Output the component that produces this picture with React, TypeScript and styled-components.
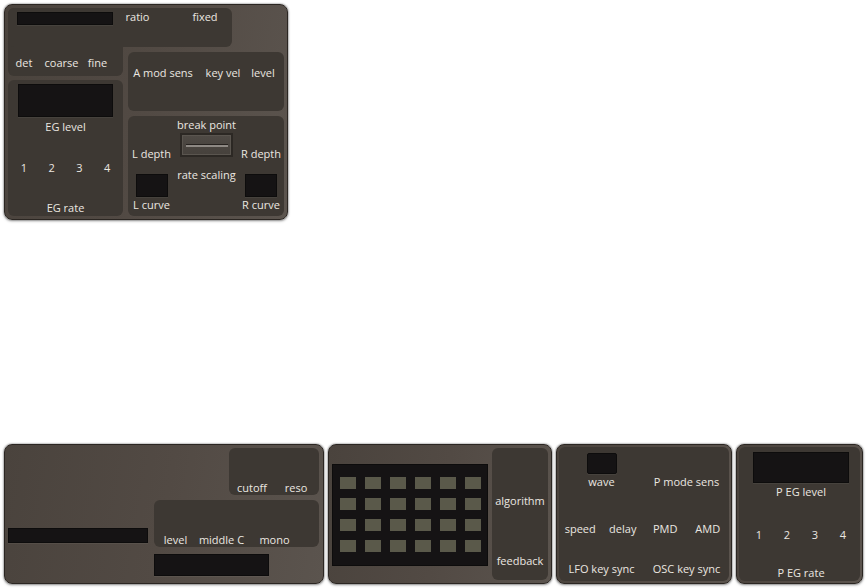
import React from "react";
import styled, { createGlobalStyle, css } from "styled-components";

const Global = createGlobalStyle`
  html, body { margin: 0; padding: 0; background: #ffffff; }
  body { font-family: "Open Sans", "Noto Sans", sans-serif; }
`;

type Place = { $c?: string; $r?: string };

const place = css<Place>`
  ${(p) => (p.$c ? `grid-column: ${p.$c};` : "")}
  ${(p) => (p.$r ? `grid-row: ${p.$r};` : "")}
`;

const Page = styled.div`
  width: 868px;
  height: 588px;
  box-sizing: border-box;
  padding: 4px 0 4px 4px;
  display: flex;
  flex-direction: column;
  justify-content: space-between;
`;

const Panel = styled.div<{ $w: number; $h: number; $pad?: number }>`
  box-sizing: border-box;
  width: ${(p) => p.$w}px;
  height: ${(p) => p.$h}px;
  border-radius: 8px;
  border: 1px solid #2b2622;
  background: linear-gradient(100deg, #4a433d 0%, #524a44 50%, #5b544e 100%);
  box-shadow: 0 0 2px rgba(0, 0, 0, 0.55), 0 1px 3px rgba(0, 0, 0, 0.35);
  padding: ${(p) => (p.$pad ?? 4) - 1}px;
`;

const Section = styled.div<Place>`
  ${place}
  background: #3d3833;
  border-radius: 6px;
`;

const Label = styled.span<Place>`
  ${place}
  justify-self: center;
  align-self: center;
  font-size: 11px;
  line-height: 14px;
  color: #ebe7e1;
  white-space: nowrap;
`;

const Screen = styled.div<Place & { $w: number; $h: number }>`
  ${place}
  box-sizing: border-box;
  width: ${(p) => p.$w}px;
  height: ${(p) => p.$h}px;
  background: #151314;
  border: 1px solid #0d0c0c;
  box-shadow: 0 1px 0 rgba(255, 255, 255, 0.05);
`;

/* ---------- operator panel (top) ---------- */

const OperatorPanel = styled(Panel)`
  display: grid;
  grid-template-columns: 115px 156px;
  column-gap: 5px;
  grid-template-rows: 39px 5px 24px 4px 31px 5px 100px;
`;

const FreqLeft = styled(Section)`
  grid-column: 1;
  grid-row: 1 / 4;
  display: grid;
  grid-template-columns: 32px 43px 29px 1fr;
  grid-template-rows: 48px 14px 1fr;
`;

const FreqWide = styled(Section)`
  grid-column: 1 / 3;
  grid-row: 1;
  width: 224px;
  display: grid;
  grid-template-columns: 9px 96px 49px 18px 50px;
  grid-template-rows: 4px 13px 1fr;
`;

const ModSens = styled(Section)`
  grid-column: 2;
  grid-row: 3 / 6;
  display: grid;
  grid-template-columns: 70px 50px 30px 1fr;
  grid-template-rows: 14px 13px 1fr;
`;

const EnvBox = styled(Section)`
  grid-column: 1;
  grid-row: 5 / 8;
  display: grid;
  padding: 0 2px;
  grid-template-columns: repeat(4, 1fr);
  grid-template-rows: 4px 33px 3px 13px 28px 14px 26px 14px 1fr;
`;

const KeyScale = styled(Section)`
  grid-column: 2;
  grid-row: 7;
  display: grid;
  grid-template-columns: 47px 63px 1fr;
  grid-template-rows: 2px 14px 1px 14px 10px 4px 7px 6px 8px 15px 1px 14px 1fr;
`;

const Slider = styled.div<Place>`
  ${place}
  justify-self: center;
  box-sizing: border-box;
  width: 53px;
  height: 24px;
  border: 2px solid #2c2824;
  background: linear-gradient(180deg, #4f4a45, #46413c);
  box-shadow: inset 0 0 0 1px #5a554f;
  display: flex;
  align-items: center;
  justify-content: center;
`;

const SliderSlot = styled.div`
  width: 42px;
  height: 2px;
  border-top: 1px solid #26221f;
  background: #8e8984;
  margin-top: 1px;
`;

/* ---------- bottom row ---------- */

const BottomRow = styled.div`
  display: flex;
  gap: 4px;
`;

const VoicePanel = styled(Panel)`
  display: grid;
  grid-template-columns: 140px 165px;
  column-gap: 6px;
  grid-template-rows: 47px 5px 47px 7px 22px;
`;

const FilterBox = styled(Section)`
  grid-column: 2;
  grid-row: 1;
  justify-self: end;
  width: 90px;
  display: grid;
  grid-template-columns: 46px 42px;
  grid-template-rows: 33px 14px;
`;

const LevelBox = styled(Section)`
  grid-column: 2;
  grid-row: 3;
  display: grid;
  grid-template-columns: 43px 49px 57px;
  grid-template-rows: 32px 15px;
`;

const WideBar = styled(Screen)`
  align-self: end;
  margin-bottom: 4px;
`;

const AlgoPanel = styled(Panel)`
  display: grid;
  grid-template-columns: 156px 56px;
  column-gap: 4px;
  grid-template-rows: 132px;
`;

const AlgoScreen = styled.div`
  align-self: start;
  margin-top: 16px;
  box-sizing: border-box;
  width: 156px;
  height: 102px;
  background: #151314;
  border: 1px solid #0d0c0c;
  padding: 12px 6px 13px 7px;
  display: grid;
  grid-template-columns: repeat(6, 16px);
  grid-auto-rows: 12px;
  gap: 9px;
`;

const AlgoCell = styled.div`
  background: #5a594a;
`;

const AlgoSide = styled(Section)`
  display: grid;
  grid-template-rows: 46px 14px 46px 14px 1fr;
  justify-items: center;
`;

const LfoBox = styled(Section)`
  display: grid;
  height: 100%;
  grid-template-columns: repeat(4, 1fr);
  grid-template-rows: 6px 21px 1px 14px 33px 14px 26px 14px 1fr;
`;

const WaveScreen = styled(Screen)`
  justify-self: center;
  border-radius: 2px;
`;

const PitchBox = styled(Section)`
  display: grid;
  height: 100%;
  box-sizing: border-box;
  padding: 0 3px 0 6px;
  grid-template-columns: repeat(4, 1fr);
  grid-template-rows: 5px 31px 2px 14px 29px 14px 24px 14px 1fr;
`;

const CenterScreen = styled(Screen)`
  justify-self: center;
`;

const algoCells = Array.from({ length: 24 }, (_, i) => i);

export default function App() {
  return (
    <>
      <Global />
      <Page>
        <OperatorPanel $w={284} $h={216}>
          <FreqLeft>
            <Label $c="1" $r="2">det</Label>
            <Label $c="2" $r="2">coarse</Label>
            <Label $c="3" $r="2">fine</Label>
          </FreqLeft>
          <FreqWide>
            <Screen $c="2" $r="2" $w={96} $h={13} />
            <Label $c="3" $r="1 / 3">ratio</Label>
            <Label $c="5" $r="1 / 3">fixed</Label>
          </FreqWide>
          <ModSens>
            <Label $c="1" $r="2">A mod sens</Label>
            <Label $c="2" $r="2">key vel</Label>
            <Label $c="3" $r="2">level</Label>
          </ModSens>
          <EnvBox>
            <CenterScreen $c="1 / -1" $r="2" $w={95} $h={33} />
            <Label $c="1 / -1" $r="4">EG level</Label>
            <Label $c="1" $r="6">1</Label>
            <Label $c="2" $r="6">2</Label>
            <Label $c="3" $r="6">3</Label>
            <Label $c="4" $r="6">4</Label>
            <Label $c="1 / -1" $r="8">EG rate</Label>
          </EnvBox>
          <KeyScale>
            <Label $c="2" $r="2">break point</Label>
            <Slider $c="2" $r="4 / 6">
              <SliderSlot />
            </Slider>
            <Label $c="1" $r="5 / 7">L depth</Label>
            <Label $c="3" $r="5 / 7">R depth</Label>
            <Label $c="2" $r="8 / 10">rate scaling</Label>
            <CenterScreen $c="1" $r="9 / 11" $w={32} $h={23} />
            <CenterScreen $c="3" $r="9 / 11" $w={32} $h={23} />
            <Label $c="1" $r="12">L curve</Label>
            <Label $c="3" $r="12">R curve</Label>
          </KeyScale>
        </OperatorPanel>

        <BottomRow>
          <VoicePanel $w={320} $h={140}>
            <FilterBox>
              <Label $c="1" $r="2">cutoff</Label>
              <Label $c="2" $r="2">reso</Label>
            </FilterBox>
            <WideBar $c="1" $r="3" $w={140} $h={15} />
            <LevelBox>
              <Label $c="1" $r="2">level</Label>
              <Label $c="2" $r="2">middle C</Label>
              <Label $c="3" $r="2">mono</Label>
            </LevelBox>
            <Screen $c="2" $r="5" $w={115} $h={22} />
          </VoicePanel>

          <AlgoPanel $w={224} $h={140}>
            <AlgoScreen>
              {algoCells.map((i) => (
                <AlgoCell key={i} />
              ))}
            </AlgoScreen>
            <AlgoSide>
              <Label $r="2">algorithm</Label>
              <Label $r="4">feedback</Label>
            </AlgoSide>
          </AlgoPanel>

          <Panel $w={176} $h={140} $pad={3}>
            <LfoBox>
              <WaveScreen $c="1 / 3" $r="2" $w={30} $h={21} />
              <Label $c="1 / 3" $r="4">wave</Label>
              <Label $c="3 / 5" $r="4">P mode sens</Label>
              <Label $c="1" $r="6">speed</Label>
              <Label $c="2" $r="6">delay</Label>
              <Label $c="3" $r="6">PMD</Label>
              <Label $c="4" $r="6">AMD</Label>
              <Label $c="1 / 3" $r="8">LFO key sync</Label>
              <Label $c="3 / 5" $r="8">OSC key sync</Label>
            </LfoBox>
          </Panel>

          <Panel $w={127} $h={140} $pad={3}>
            <PitchBox>
              <CenterScreen $c="1 / -1" $r="2" $w={96} $h={31} />
              <Label $c="1 / -1" $r="4">P EG level</Label>
              <Label $c="1" $r="6">1</Label>
              <Label $c="2" $r="6">2</Label>
              <Label $c="3" $r="6">3</Label>
              <Label $c="4" $r="6">4</Label>
              <Label $c="1 / -1" $r="8">P EG rate</Label>
            </PitchBox>
          </Panel>
        </BottomRow>
      </Page>
    </>
  );
}
